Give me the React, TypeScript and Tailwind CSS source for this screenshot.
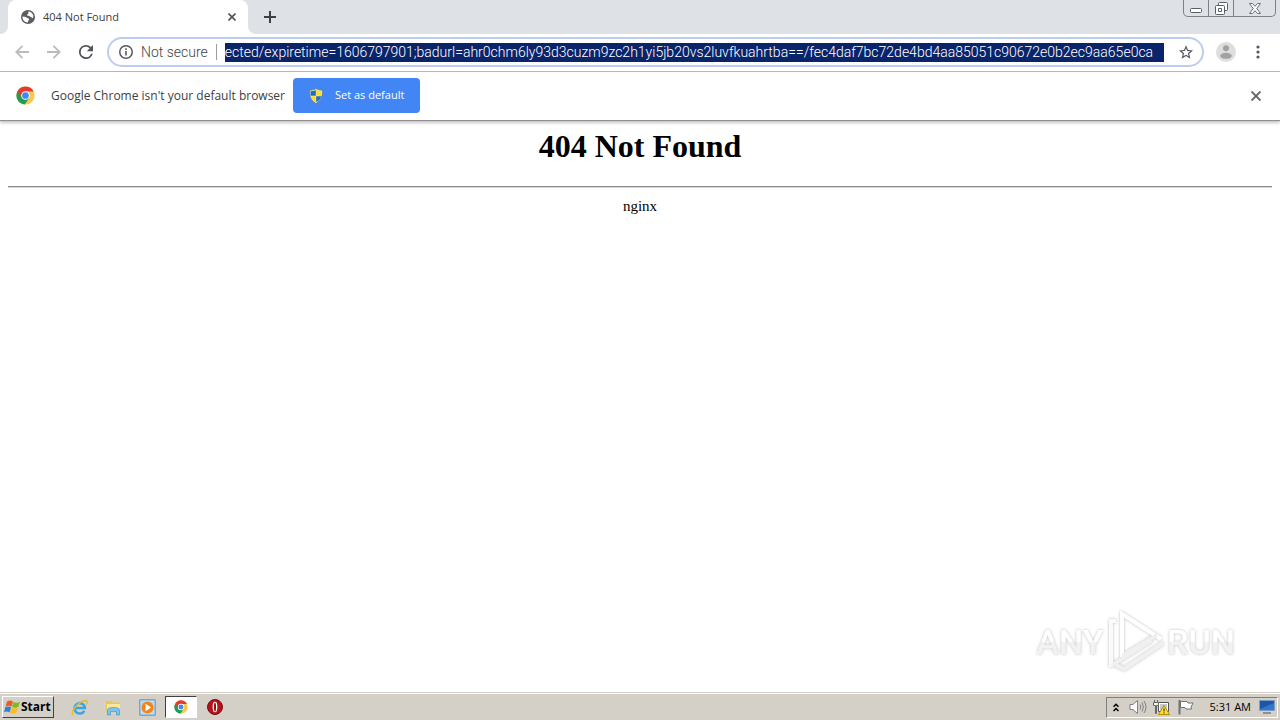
import React, { useEffect, useRef, useState } from "react";

const ui = "font-['Open_Sans','Noto_Sans',sans-serif]";

function ChromeLogo({ className }: { className: string }) {
  return (
    <svg viewBox="0 0 48 48" className={className} aria-hidden="true">
      <circle cx="24" cy="24" r="23" fill="#fbc94a" />
      <path d="M24 24 4.1 12.5A23 23 0 0 0 22 46.9L34 29.5z" fill="#1e9e54" />
      <path d="M4.1 12.5A23 23 0 0 1 43.9 12.5L44.5 14H24L14 30z" fill="#e53a2e" />
      <circle cx="24" cy="24" r="11" fill="#fff" />
      <circle cx="24" cy="24" r="8.5" fill="#4285f4" />
    </svg>
  );
}

function Globe() {
  return (
    <svg viewBox="0 0 14 14" className="size-3.5 shrink-0" aria-hidden="true">
      <circle cx="7" cy="7" r="7" fill="#5a5d61" />
      <path d="M1.6 6.2C3 7 4.600 6.600 5.500 7.600 6.500 8.700 7.800 8 8 9.200 8.200 10.500 6.800 10.800 6.800 12.400 3.500 12.500 1.200 9.600 1.600 6.200z" fill="#fff" />
      <path d="M7.500 1.600C9.500 1.700 11.400 3 12.200 5.200 12.400 6.500 12.200 7.500 11.800 8.200 11 7 10 7.200 9 6.400 8.200 5.700 6.400 6.300 6 5.200 5.700 4.200 7.400 4.400 7.400 3.400 7.400 2.700 7 2.200 7.500 1.600z" fill="#fff" />
    </svg>
  );
}

function Shield() {
  return (
    <svg viewBox="0 0 16 18" className="h-4 w-3.5 shrink-0" aria-hidden="true">
      <path d="M8 .5C10 2 12.500 2.400 15.300 2.400 15.600 9 13.800 14.200 8 17.500 2.200 14.200.4 9 .7 2.400 3.500 2.400 6 2 8 .5z" fill="#f3eebc" stroke="#5b6f86" strokeWidth=".7" />
      <path d="M7.800 2.200V8.800H1.900C1.700 7 1.700 5.500 1.800 3.500 4 3.500 6 3.200 7.800 2.200z" fill="#1f6fc0" />
      <path d="M8.200 2.200C10 3.200 12 3.500 14.200 3.500 14.300 5.500 14.300 7 14.100 8.800H8.200z" fill="#ffdc2e" />
      <path d="M2 9.200H7.800V16.100C4.600 14.400 2.600 12 2 9.200z" fill="#ffdc2e" />
      <path d="M8.200 9.200H14C13.400 12 11.400 14.400 8.200 16.100z" fill="#1f6fc0" />
    </svg>
  );
}

function TabStrip() {
  return (
    <header className="flex h-[34px] bg-[#dee1e6]">
      <div className="w-2 shrink-0 bg-white">
        <div className="h-full rounded-br-lg bg-[#dee1e6]" />
      </div>
      <div className="flex w-60 items-center rounded-t-lg bg-white pr-2 pl-[13px]">
        <Globe />
        <span className="ml-2 flex-1 text-[11px] text-[#3c4043]">404 Not Found</span>
        <button aria-label="Close tab" className="flex size-4 items-center justify-center">
          <svg viewBox="0 0 8 8" className="size-2" fill="none" stroke="#505357" strokeWidth="1.600">
            <path d="M.5.5l7 7M7.500.5l-7 7" />
          </svg>
        </button>
      </div>
      <div className="w-2 shrink-0 bg-white">
        <div className="h-full rounded-bl-lg bg-[#dee1e6]" />
      </div>
      <button aria-label="New tab" className="ml-1 flex w-5 items-center justify-center">
        <svg viewBox="0 0 12 12" className="size-3" fill="none" stroke="#3c4043" strokeWidth="2">
          <path d="M6 0v12M0 6h12" />
        </svg>
      </button>
      <div className="mr-1 ml-auto flex h-[17px] rounded-b-[5px] border border-t-0 border-[#7d828a]">
        <button aria-label="Minimize" className="flex w-[25px] items-end justify-center border-r border-[#7d828a] pb-[3px]">
          <svg viewBox="0 0 12 5" className="h-[5px] w-3">
            <rect x=".5" y=".5" width="11" height="4" rx="1" fill="#fff" stroke="#5a5e68" />
          </svg>
        </button>
        <button aria-label="Restore" className="flex w-[25px] items-center justify-center border-r border-[#7d828a]">
          <svg viewBox="0 0 13 13" className="size-[13px]" fill="#fff" stroke="#5a5e68">
            <rect x="3.500" y=".5" width="9" height="8" rx="1" />
            <rect x=".5" y="3.500" width="9" height="9" rx="1" />
            <path d="M3.500 6.500h3v3h-3z" />
          </svg>
        </button>
        <button aria-label="Close" className="flex w-[41px] items-center justify-center">
          <svg viewBox="0 0 12 11" className="h-[11px] w-3" fill="#fff" stroke="#6a6e78">
            <path d="M.5.5h3L6 3.300 8.500.5h3L7.800 5.500l3.700 5h-3L6 7.700 3.500 10.500h-3l3.700-5z" />
          </svg>
        </button>
      </div>
    </header>
  );
}

function Toolbar() {
  const [url, setUrl] = useState(
    "ected/expiretime=1606797901;badurl=ahr0chm6ly93d3cuzm9zc2h1yi5jb20vs2luvfkuahrtba==/fec4daf7bc72de4bd4aa85051c90672e0b2ec9aa65e0ca",
  );
  const field = useRef<HTMLInputElement>(null);

  // Keep the end of a long address in view.
  useEffect(() => {
    if (field.current) field.current.scrollLeft = field.current.scrollWidth;
  }, []);

  return (
    <nav className="flex h-[38px] items-center border-b border-[#b4b6ba] bg-white pr-3.5 pb-px pl-3.5">
      <button aria-label="Back" className="mr-4 flex size-4 items-center justify-center">
        <svg viewBox="0 0 14 14" className="size-3.5" fill="none" stroke="#b9bbbe" strokeWidth="1.800">
          <path d="M14 7H1.500M7.500.8 1.300 7l6.200 6.200" />
        </svg>
      </button>
      <button aria-label="Forward" className="mr-4 flex size-4 items-center justify-center">
        <svg viewBox="0 0 14 14" className="size-3.5" fill="none" stroke="#b9bbbe" strokeWidth="1.800">
          <path d="M0 7h12.500M6.500.8 12.700 7l-6.200 6.200" />
        </svg>
      </button>
      <button aria-label="Reload" className="mr-[13px] flex size-4 items-center justify-center">
        <svg viewBox="4 4 16 16" className="size-3.5" fill="#505357">
          <path d="M17.650 6.350A7.960 7.960 0 0 0 12 4a8 8 0 1 0 7.730 10h-2.080A6 6 0 1 1 12 6c1.660 0 3.140.69 4.220 1.780L13 11h7V4z" />
        </svg>
      </button>
      <div className="flex h-[30px] min-w-0 flex-1 items-center rounded-full border-2 border-[#bccdf0] pr-2 pl-2.5">
        <svg viewBox="0 0 14 14" className="size-3.5 shrink-0" fill="none" stroke="#55585c" aria-hidden="true">
          <circle cx="7" cy="7" r="6.250" strokeWidth="1.500" />
          <path d="M7 6v4.500M7 3.300v1.600" strokeWidth="1.600" />
        </svg>
        <label htmlFor="url" className="ml-2 shrink-0 font-[Roboto,sans-serif] text-sm font-light text-[#404448]">
          Not secure
        </label>
        <span className="mx-2 h-4 w-px shrink-0 bg-[#9a9da1]" />
        <input
          id="url"
          ref={field}
          value={url}
          onChange={(e) => setUrl(e.target.value)}
          className="h-[19px] min-w-0 flex-1 bg-[#0a246a] font-[Roboto,sans-serif] text-sm font-light text-white outline-none"
        />
        <button aria-label="Bookmark" className="ml-3.5 flex size-4 shrink-0 items-center justify-center">
          <svg viewBox="2 2 20 19" className="size-3.5" fill="#505357">
            <path d="M22 9.240l-7.190-.62L12 2 9.190 8.630 2 9.240l5.460 4.730L5.820 21 12 17.270 18.180 21l-1.630-7.030L22 9.240zM12 15.400l-3.760 2.270 1-4.280-3.320-2.880 4.380-.38L12 6.100l1.710 4.040 4.380.38-3.320 2.880 1 4.280L12 15.400z" />
          </svg>
        </button>
      </div>
      <button aria-label="Profile" className="ml-3 shrink-0">
        <svg viewBox="0 0 20 20" className="size-5">
          <circle cx="10" cy="10" r="10" fill="#dedede" />
          <circle cx="10" cy="6.200" r="3" fill="#a2a2a2" />
          <ellipse cx="10" cy="13.800" rx="5.800" ry="3" fill="#a2a2a2" />
        </svg>
      </button>
      <button aria-label="Menu" className="ml-3.5 flex w-4 shrink-0 justify-center">
        <svg viewBox="0 0 4 14" className="h-3.5 w-1" fill="#55585c">
          <circle cx="2" cy="2" r="1.600" />
          <circle cx="2" cy="7" r="1.600" />
          <circle cx="2" cy="12" r="1.600" />
        </svg>
      </button>
    </nav>
  );
}

function InfoBar() {
  return (
    <div className="flex h-[49px] items-center border-b border-[#8e8e8e] bg-white px-4 pb-px shadow-[0_2px_3px_#c4c4c4]">
      <ChromeLogo className="size-[19px]" />
      <p className="ml-4 text-xs text-[#3c4043]">Google Chrome isn't your default browser</p>
      <button className="ml-2 flex h-[35px] w-[127px] items-center rounded bg-[#4285f4] pl-4 text-[11px] text-white">
        <Shield />
        <span className="ml-3">Set as default</span>
      </button>
      <button aria-label="Dismiss" className="ml-auto flex size-4 items-center justify-center">
        <svg viewBox="0 0 10 10" className="size-2.5" fill="none" stroke="#5f6368" strokeWidth="1.900">
          <path d="M.5.5l9 9M9.500.5l-9 9" />
        </svg>
      </button>
    </div>
  );
}

function Watermark() {
  return (
    <svg viewBox="0 0 204 70" className="absolute right-11 bottom-[18px] h-[70px] w-[204px]" role="img" aria-label="ANY RUN">
      <defs>
        <linearGradient id="fade" x1="0" y1="0" x2="0" y2="70" gradientUnits="userSpaceOnUse">
          <stop offset="0.53" stopColor="#ffffff" />
          <stop offset="0.53" stopColor="#f2f2f2" />
        </linearGradient>
        <filter id="glow" x="-10%" y="-20%" width="120%" height="140%">
          <feDropShadow dx="0" dy="0" stdDeviation="1.500" floodColor="#8c8c8c" floodOpacity="0.6" />
        </filter>
      </defs>
      <g filter="url(#glow)">
        <g fill="url(#fade)" fontFamily="Roboto, sans-serif" fontSize="34" fontWeight="500">
          <text x="38" y="49" textAnchor="middle">ANY</text>
          <text x="169" y="49" textAnchor="middle">RUN</text>
        </g>
        <g fill="none" strokeWidth="4">
          <path d="M84 16h-5v46" stroke="#fafafa" />
          <path d="M90 52V9l39 25" stroke="#fff" />
          <path d="M90 51l35-21" stroke="#f0f0f0" />
          <path d="M131 38 92 64l-10-5 38-24" stroke="#f0f0f0" />
        </g>
      </g>
    </svg>
  );
}

function Tray() {
  return (
    <div className="flex h-[21px] items-center border border-[#808080] border-r-white border-b-white pr-0.5 pl-1.5">
      <button aria-label="Show hidden icons" className="w-2">
        <svg viewBox="0 0 6 9" className="h-[9px] w-1.5" fill="none" stroke="#000" strokeWidth="1.500">
          <path d="M.5 3.800 3 1.300l2.500 2.500M.5 8 3 5.500 5.500 8" />
        </svg>
      </button>
      <svg viewBox="0 0 18 16" className="ml-2 h-4 w-[18px]" fill="#fff" stroke="#808080" aria-hidden="true">
        <path d="M1 5.500h3L8.500 1.500v13L4 10.500H1z" />
        <path d="M11 5.500q1.500 2.500 0 5M13 3.500q2.800 4.500 0 9M15 2q4 6 0 12" fill="none" />
      </svg>
      <svg viewBox="0 0 17 16" className="ml-1.5 h-4 w-[17px]" aria-hidden="true">
        <path d="M5.500 3.500h10v9h-10z" fill="#fff" stroke="#555" />
        <path d="M7 5h7v6H7z" fill="#c5c8cc" />
        <path d="M.5 3.500h5v3h-2v8h-1v-8h-2zM1.500 1v2.500M4.500 1v2.500" fill="#eee" stroke="#666" />
        <path d="M11 6.500 16.500 15.500h-11z" fill="#ffdf32" stroke="#b28c00" />
        <path d="M11 9.500v3M11 13.300v1.200" stroke="#222" />
      </svg>
      <svg viewBox="0 0 16 16" className="ml-2 size-4" fill="#fff" stroke="#707070" aria-hidden="true">
        <path d="M1.500 1v14.500" strokeWidth="2" />
        <path d="M2.500 2.500H9l1 1.500h5L13 8l.5 2H8L7 8.500H2.500z" />
      </svg>
      <time className="ml-4 text-[11px] text-black">5:31 AM</time>
      <svg viewBox="0 0 16 14" className="ml-2 h-3.5 w-4" aria-hidden="true">
        <path d="M.5.5h15v10H.5z" fill="#1d56a5" stroke="#7d9cc4" />
        <path d="M1 9 15 3v7H1z" fill="#2f78cc" />
        <path d="M4 13h8" stroke="#778" strokeWidth="1.500" />
      </svg>
    </div>
  );
}

function Taskbar() {
  return (
    <footer className="flex h-[27px] items-center border-t border-white bg-[#d4d0c8] pr-0.5 pl-0.5 shadow-[0_-1px_0_#d4d0c8]">
      <button className="flex h-[22px] w-[52px] items-center border border-white border-r-[#404040] border-b-[#404040] pl-px text-xs font-bold text-black">
        <svg viewBox="0 0 17 16" className="h-4 w-[17px] shrink-0" aria-hidden="true">
          <path d="M3 2.500q3.200-2 6 .2L7.400 7.800Q4.700 6 1.500 7.700z" fill="#ee5a24" />
          <path d="M9.500 3q3 1.800 6.500-.3l-1.600 5.100q-3.200 1.700-6.400 0z" fill="#7db928" />
          <path d="M1.300 8.300q3-1.500 5.800.1L5.500 13.500Q3 11.700 0 13.300z" fill="#2f7fd6" />
          <path d="M7.700 8.600q3.200 1.600 6.400.1L12.500 13.600q-3.200 1.700-6.300-.1z" fill="#fbbd18" />
        </svg>
        Start
      </button>
      <button aria-label="Internet Explorer" className="ml-[17px]">
        <svg viewBox="0 0 17 17" className="size-[17px]" fill="none">
          <path d="M13.300 11.800A5.200 5.200 0 1 1 13.900 9H4.500" stroke="#3aa5e6" strokeWidth="2.600" />
          <path d="M2 15.800C-1 13 7 2.500 14.500 1.500 17 1.500 16.300 4 15.500 5.500" stroke="#e9b92e" strokeWidth="1.300" />
        </svg>
      </button>
      <button aria-label="File Explorer" className="ml-[17px]">
        <svg viewBox="0 0 17 17" className="size-[17px]">
          <path d="M1 2h6l1 1.500h7V13H1z" fill="#eac755" />
          <path d="M2 5h13v8H2z" fill="#fae79a" />
          <path d="M2.500 16V11Q2.500 8.500 8.500 8.500T14.500 11V16h-3v-3.500h-6V16z" fill="#7cc4ea" stroke="#3b8fc0" strokeWidth=".6" />
        </svg>
      </button>
      <button aria-label="Media Player" className="ml-[17px]">
        <svg viewBox="0 0 17 17" className="size-[17px]">
          <path d="M.8.8h15.400v15.400H.8z" fill="#bcdcf3" stroke="#4d94cc" />
          <circle cx="8.500" cy="8.500" r="6" fill="#f48414" />
          <path d="M6.500 4.800v7.400l5.700-3.700z" fill="#fff" />
        </svg>
      </button>
      <button aria-label="Google Chrome" className="ml-[9px] flex h-[22px] w-8 items-center justify-center border border-[#404040] border-r-white border-b-white bg-white">
        <ChromeLogo className="size-3.5" />
      </button>
      <button aria-label="Opera" className="ml-2.5">
        <svg viewBox="0 0 16 16" className="size-4">
          <circle cx="8" cy="8" r="7.500" fill="#b5121b" stroke="#7c0a10" />
          <ellipse cx="8" cy="8" rx="2.400" ry="5.300" fill="#fff" />
          <ellipse cx="8" cy="8" rx="1" ry="4.500" fill="#8c0d14" />
        </svg>
      </button>
      <div className="ml-auto">
        <Tray />
      </div>
    </footer>
  );
}

export default function App() {
  return (
    <div className={`flex min-h-screen flex-col bg-white ${ui}`}>
      <TabStrip />
      <Toolbar />
      <InfoBar />
      <main className="relative flex-1 px-2 pt-[7px] text-center font-['Liberation_Serif',serif] text-black">
        <h1 className="text-[32px] leading-9 font-bold">404 Not Found</h1>
        <hr className="mt-[22px] h-0.5 border-t border-b border-t-[#8c8c8c] border-b-[#d8d8d8]" />
        <p className="mt-2 text-[15px] leading-5">nginx</p>
        <Watermark />
      </main>
      <Taskbar />
    </div>
  );
}
